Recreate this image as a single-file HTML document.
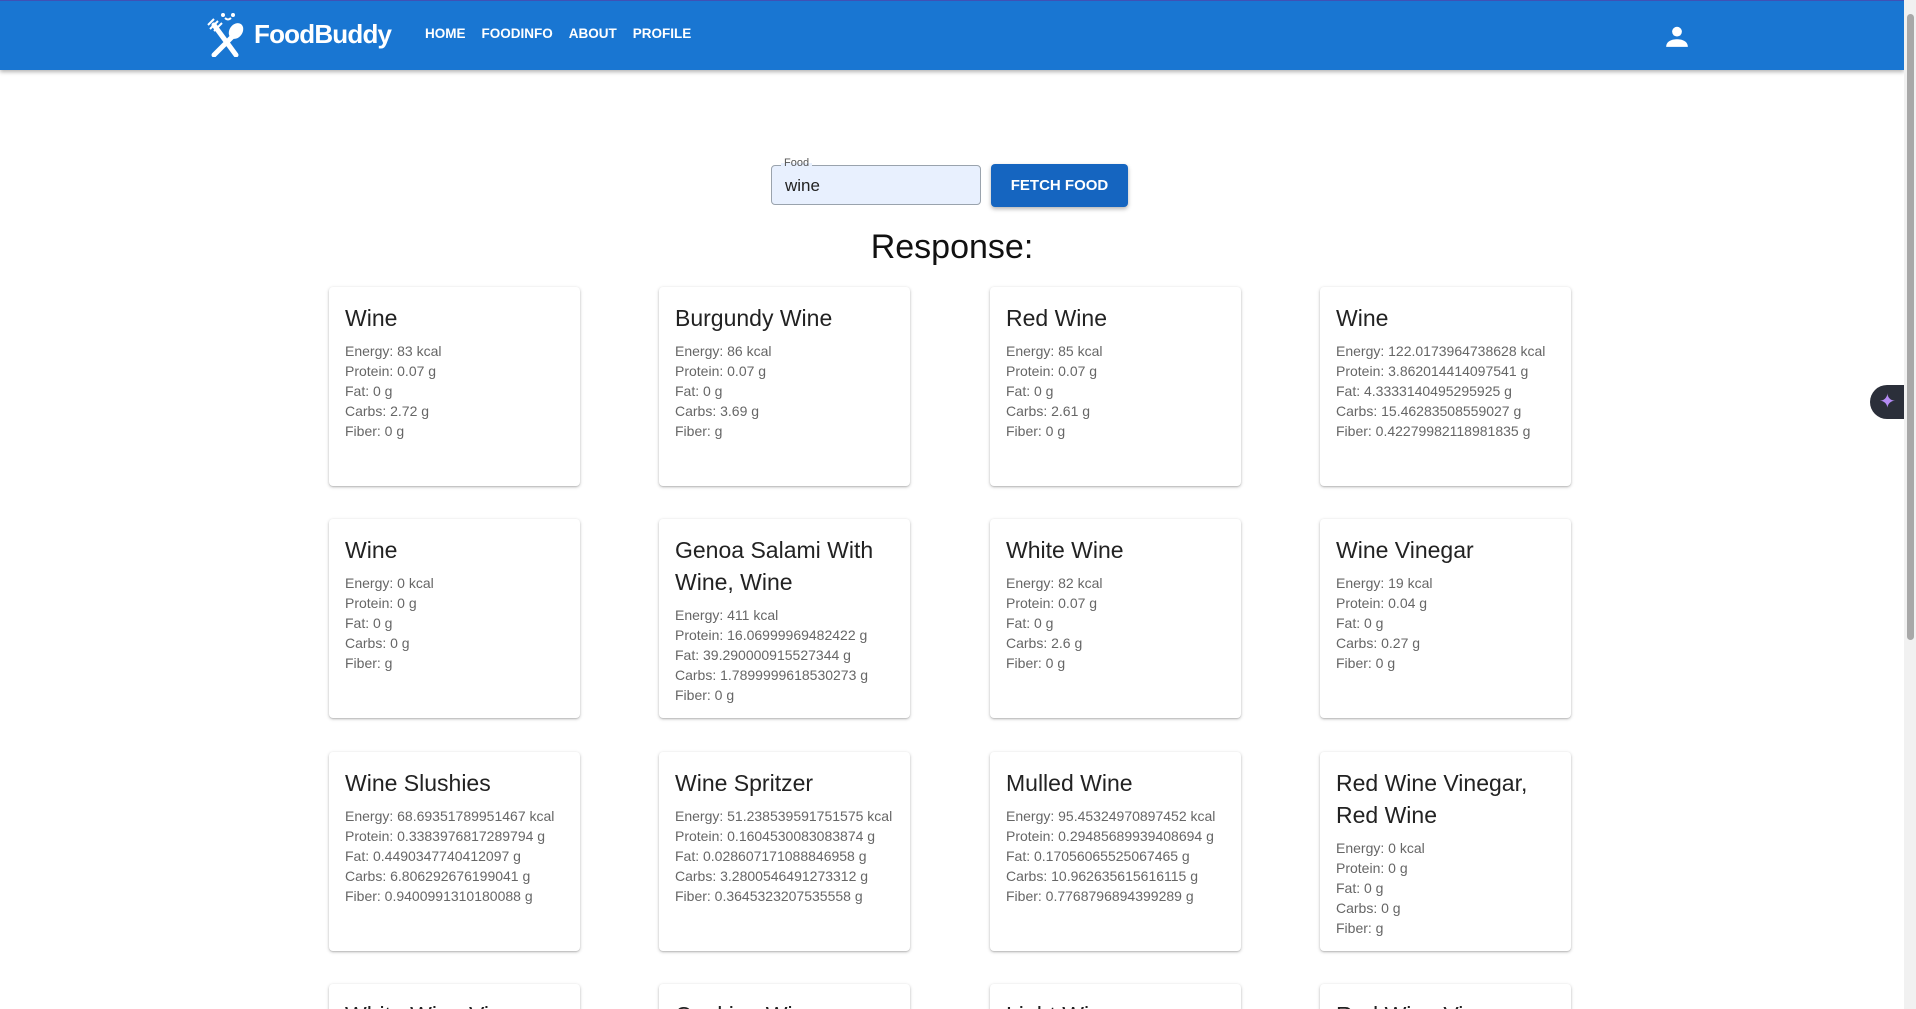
<!DOCTYPE html>
<html><head><meta charset="utf-8"><style>
*{box-sizing:border-box;margin:0;padding:0}
html,body{width:1916px;height:1009px;overflow:hidden}
body{background:#fff;font-family:"Liberation Sans",sans-serif;position:relative}
.hdr{position:absolute;left:0;top:0;width:1904px;height:70px;background:#1976d2;box-shadow:0 2px 4px rgba(0,0,0,.3);border-top:1px solid #3f51b5}
.logo{position:absolute;left:206px;top:10px;display:flex;align-items:center;color:#fff}
.logo span{font-size:26px;font-weight:bold;margin-left:4px;letter-spacing:-0.8px}
.nav{position:absolute;left:425px;top:25px;color:#fff;font-size:13.5px;font-weight:bold}
.nav span{margin-right:16px}
.user{position:absolute;left:1664px;top:22px}
.sb{position:absolute;right:0;top:0;width:12px;height:1009px;background:#f1f1f1}
.sb div{position:absolute;left:3px;top:14px;width:7px;height:626px;background:#a8a8a8;border-radius:4px}
.inp{position:absolute;left:771px;top:165px;width:210px;height:40px;background:#e8f0fe;border:1px solid #9aa3ad;border-radius:4px;font-size:17px;padding:10px 13px;color:#222}
.lbl{position:absolute;left:781px;top:157px;font-size:11px;color:#555;background:linear-gradient(#fff 50%,#e8f0fe 50%);padding:0 3px}
.btn{position:absolute;left:991px;top:164px;width:137px;height:43px;background:#1565c0;color:#fff;font-weight:bold;font-size:15px;border-radius:4px;box-shadow:0 2px 4px rgba(0,0,0,.3);text-align:center;line-height:43px}
h1{position:absolute;left:0;width:1904px;text-align:center;top:228px;font-size:34px;font-weight:normal;color:#111}
.card{position:absolute;width:251px;height:199px;background:#fff;border-radius:4px;box-shadow:0 1px 3px rgba(0,0,0,.25),0 1px 1px rgba(0,0,0,.1);padding:15px 16px;overflow:hidden}
.card h2{font-size:23px;font-weight:normal;line-height:32px;color:#222;margin-bottom:7px}
.card p{font-size:14px;line-height:20px;color:#666}
.fab{position:absolute;left:1870px;top:385px;width:40px;height:34px;background:#2b2f3a;border-radius:17px 0 0 17px;color:#b58cf5;font-size:20px;line-height:34px;padding-left:9px}
</style></head><body>
<div class="hdr">
<div class="logo"><svg width="44" height="46" viewBox="0 0 44 46" fill="#fff" stroke="#fff"><circle cx="17" cy="4" r="1.5"/><circle cx="27" cy="4" r="1.5"/><path d="M19 7q3 3 6 0" fill="none" stroke-width="2"/><ellipse cx="30" cy="20" rx="6" ry="8" transform="rotate(35 30 20)"/><path d="M26 26L8 44" stroke-width="5" stroke-linecap="round"/><path d="M8 14L30 44" stroke-width="5" stroke-linecap="round"/><path d="M4 18l8-8M2 14l6-6M8 20l8-8" stroke-width="2"/></svg><span>FoodBuddy</span></div>
<div class="nav"><span>HOME</span><span>FOODINFO</span><span>ABOUT</span><span>PROFILE</span></div>
<svg class="user" width="26" height="26" viewBox="0 0 24 24" fill="#fff"><circle cx="12" cy="8" r="4.5"/><path d="M2 22c0-5 5-7 10-7s10 2 10 7z"/></svg>
</div>
<div class="inp">wine</div><div class="lbl">Food</div>
<div class="btn">FETCH FOOD</div>
<h1>Response:</h1>

<div class="card" style="left:329px;top:287px"><h2>Wine</h2><p>Energy: 83 kcal<br>Protein: 0.07 g<br>Fat: 0 g<br>Carbs: 2.72 g<br>Fiber: 0 g</p></div>
<div class="card" style="left:659px;top:287px"><h2>Burgundy Wine</h2><p>Energy: 86 kcal<br>Protein: 0.07 g<br>Fat: 0 g<br>Carbs: 3.69 g<br>Fiber: g</p></div>
<div class="card" style="left:990px;top:287px"><h2>Red Wine</h2><p>Energy: 85 kcal<br>Protein: 0.07 g<br>Fat: 0 g<br>Carbs: 2.61 g<br>Fiber: 0 g</p></div>
<div class="card" style="left:1320px;top:287px"><h2>Wine</h2><p>Energy: 122.0173964738628 kcal<br>Protein: 3.862014414097541 g<br>Fat: 4.3333140495295925 g<br>Carbs: 15.46283508559027 g<br>Fiber: 0.42279982118981835 g</p></div>

<div class="card" style="left:329px;top:519px"><h2>Wine</h2><p>Energy: 0 kcal<br>Protein: 0 g<br>Fat: 0 g<br>Carbs: 0 g<br>Fiber: g</p></div>
<div class="card" style="left:659px;top:519px"><h2>Genoa Salami With Wine, Wine</h2><p>Energy: 411 kcal<br>Protein: 16.06999969482422 g<br>Fat: 39.290000915527344 g<br>Carbs: 1.7899999618530273 g<br>Fiber: 0 g</p></div>
<div class="card" style="left:990px;top:519px"><h2>White Wine</h2><p>Energy: 82 kcal<br>Protein: 0.07 g<br>Fat: 0 g<br>Carbs: 2.6 g<br>Fiber: 0 g</p></div>
<div class="card" style="left:1320px;top:519px"><h2>Wine Vinegar</h2><p>Energy: 19 kcal<br>Protein: 0.04 g<br>Fat: 0 g<br>Carbs: 0.27 g<br>Fiber: 0 g</p></div>

<div class="card" style="left:329px;top:752px"><h2>Wine Slushies</h2><p>Energy: 68.69351789951467 kcal<br>Protein: 0.3383976817289794 g<br>Fat: 0.4490347740412097 g<br>Carbs: 6.806292676199041 g<br>Fiber: 0.9400991310180088 g</p></div>
<div class="card" style="left:659px;top:752px"><h2>Wine Spritzer</h2><p>Energy: 51.238539591751575 kcal<br>Protein: 0.1604530083083874 g<br>Fat: 0.028607171088846958 g<br>Carbs: 3.2800546491273312 g<br>Fiber: 0.3645323207535558 g</p></div>
<div class="card" style="left:990px;top:752px"><h2>Mulled Wine</h2><p>Energy: 95.45324970897452 kcal<br>Protein: 0.29485689939408694 g<br>Fat: 0.17056065525067465 g<br>Carbs: 10.962635615616115 g<br>Fiber: 0.7768796894399289 g</p></div>
<div class="card" style="left:1320px;top:752px"><h2>Red Wine Vinegar, Red Wine</h2><p>Energy: 0 kcal<br>Protein: 0 g<br>Fat: 0 g<br>Carbs: 0 g<br>Fiber: g</p></div>

<div class="card" style="left:329px;top:984px;height:25px"><h2>White Wine Vinegar</h2></div>
<div class="card" style="left:659px;top:984px;height:25px"><h2>Cooking Wine</h2></div>
<div class="card" style="left:990px;top:984px;height:25px"><h2>Light Wine</h2></div>
<div class="card" style="left:1320px;top:984px;height:25px"><h2>Red Wine Vinegar</h2></div>

<div class="fab">✦</div>
<div class="sb"><div></div></div>
</body></html>
